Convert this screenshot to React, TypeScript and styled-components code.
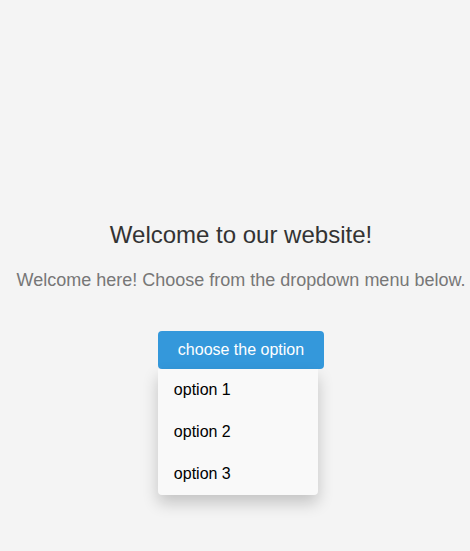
import React from "react";
import styled, { createGlobalStyle } from "styled-components";

const Global = createGlobalStyle`
  html, body { margin: 0; padding: 0; background: #f4f4f4; }
  body { font-family: "Liberation Sans", Arial, sans-serif; }
`;

const Page = styled.main`
  display: flex;
  flex-direction: column;
  align-items: center;
  padding: 221px 0 0 12px;
  min-height: 551px;
  box-sizing: border-box;
`;

const Title = styled.h1`
  margin: 0;
  font-size: 24px;
  line-height: 28px;
  font-weight: normal;
  color: #333;
`;

const Subtitle = styled.p`
  margin: 21px 0 0;
  font-size: 18px;
  line-height: 21px;
  color: #777;
  white-space: nowrap;
`;

const Dropdown = styled.div`
  position: relative;
  display: inline-block;
  margin-top: 40px;
`;

const Trigger = styled.button`
  display: block;
  border: none;
  border-radius: 4px;
  background: #3498db;
  color: #fff;
  font-family: "Liberation Sans", Arial, sans-serif;
  font-size: 16px;
  line-height: 18px;
  padding: 10px 20px;
  cursor: pointer;
`;

const Menu = styled.div`
  position: absolute;
  top: 100%;
  left: 0;
  min-width: 160px;
  background: #f9f9f9;
  border-radius: 0 0 4px 4px;
  box-shadow: 0 8px 16px rgba(0, 0, 0, 0.2);
  z-index: 1;
`;

const Item = styled.a`
  display: block;
  padding: 12px 16px;
  font-size: 16px;
  line-height: 18px;
  color: #000;
  text-decoration: none;
`;

export default function App() {
  return (
    <>
      <Global />
      <Page>
        <Title>Welcome to our website!</Title>
        <Subtitle>Welcome here! Choose from the dropdown menu below.</Subtitle>
        <Dropdown>
          <Trigger>choose the option</Trigger>
          <Menu>
            <Item href="#">option 1</Item>
            <Item href="#">option 2</Item>
            <Item href="#">option 3</Item>
          </Menu>
        </Dropdown>
      </Page>
    </>
  );
}
